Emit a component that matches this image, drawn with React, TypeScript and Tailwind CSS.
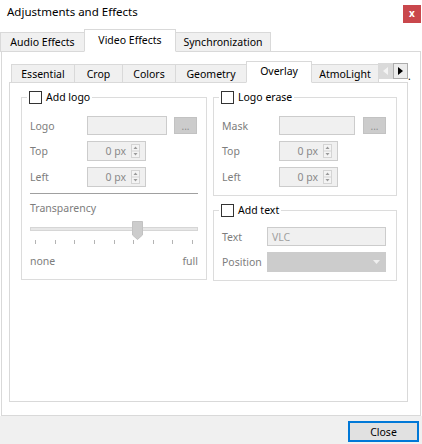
import React from 'react';

const Checkbox = () => <span className="block w-[13px] h-[13px] border border-[#333333] bg-white shrink-0" />;

const SpinArrows = () => (
  <svg width="9" height="14" viewBox="0 0 9 14" className="shrink-0">
    <rect x="0.5" y="0.5" width="8" height="13" fill="#f4f4f4" stroke="#d4d4d4" />
    <line x1="1" y1="7" x2="8" y2="7" stroke="#d4d4d4" />
    <polygon points="2.5,5 6.5,5 4.5,2.5" fill="#9a9a9a" />
    <polygon points="2.5,9 6.5,9 4.5,11.5" fill="#9a9a9a" />
  </svg>
);

const Spin = () => (
  <div className="flex items-center w-[59px] h-[20px] border border-[#cccccc] bg-[#f0f0f0] pr-[5px]">
    <span className="flex-1 text-right pr-[5px] text-[#8a8a8a]">0 px</span>
    <SpinArrows />
  </div>
);

const Browse = ({ w }: { w: string }) => (
  <div className={`${w} h-[17px] bg-[#cccccc] border border-[#c2c2c2] flex items-end justify-center pb-[2px] text-[#8c8c8c] text-[10px] leading-none`}>
    ...
  </div>
);

const Legend = ({ label }: { label: string }) => (
  <legend className="ml-[5px] px-[2px] h-[16px] flex items-center gap-[4px] text-black">
    <Checkbox />
    <span>{label}</span>
  </legend>
);

const Label = ({ children }: { children: React.ReactNode }) => (
  <span className="text-[#7d7d7d]">{children}</span>
);

const topTabs = [
  { name: 'Audio Effects', w: 'w-[85px]' },
  { name: 'Video Effects', w: 'w-[92px]', active: true },
  { name: 'Synchronization', w: 'w-[96px]' },
];

const innerTabs = [
  { name: 'Essential', w: 'w-[64px]' },
  { name: 'Crop', w: 'w-[49px]' },
  { name: 'Colors', w: 'w-[54px]' },
  { name: 'Geometry', w: 'w-[72px]' },
  { name: 'Overlay', w: 'w-[66px]', active: true },
  { name: 'AtmoLight', w: 'w-[68px]' },
];

export default function App() {
  return (
    <div className="w-[422px] h-[444px] bg-white flex flex-col font-['Noto_Sans',sans-serif] text-[10.5px] leading-[16px] text-black overflow-hidden">
      {/* title bar */}
      <div className="h-[29px] shrink-0 flex items-start justify-between">
        <span className="mt-[4px] ml-[7px] text-[11.5px]">Adjustments and Effects</span>
        <div className="mt-[5px] mr-[1px] w-[18px] h-[18px] bg-[#c9474c] flex items-center justify-center text-white text-[10px] font-bold leading-none pb-[2px]">
          x
        </div>
      </div>

      {/* top tabs */}
      <div className="flex items-end h-[23px] shrink-0 -mb-px relative z-10">
        {topTabs.map((t, i) => (
          <div
            key={t.name}
            className={`${t.w} ${i > 0 ? '-ml-px' : ''} flex items-center justify-center border border-[#d9d9d9] ${
              t.active ? 'h-[23px] bg-white border-b-white relative z-10 pb-[2px]' : 'h-[20px] bg-[#f0f0f0]'
            }`}
          >
            {t.name}
          </div>
        ))}
      </div>

      {/* outer pane */}
      <div className="ml-[1px] w-[420px] h-[365px] shrink-0 border border-[#d9d9d9] pt-[9px] pl-[7px]">
        <div className="flex items-end h-[22px] -mb-px relative z-10">
          {innerTabs.map((t, i) => (
            <div
              key={t.name}
              className={`${t.w} ${i > 0 ? '-ml-px' : 'ml-[2px]'} flex items-center justify-center border border-[#d9d9d9] ${
                t.active ? 'h-[22px] bg-white border-b-white relative z-10 pb-[2px]' : 'h-[19px] bg-[#f0f0f0]'
              }`}
            >
              {t.name}
            </div>
          ))}
          <div className="self-start mt-[2px] -ml-px flex relative z-20">
            <div className="w-[15px] h-[16px] bg-[#dadada] flex items-center justify-center">
              <svg width="5" height="8" viewBox="0 0 5 8">
                <polygon points="5,0 5,8 0,4" fill="#f4f4f4" />
              </svg>
            </div>
            <div className="w-[15px] h-[16px] bg-[#ececec] border border-[#adadad] flex items-center justify-center">
              <svg width="5" height="8" viewBox="0 0 5 8">
                <polygon points="0,0 0,8 5,4" fill="#000000" />
              </svg>
            </div>
            <span className="text-[10px] leading-none self-end -mb-[2px]">.</span>
          </div>
        </div>

        {/* inner pane */}
        <div className="w-[399px] h-[320px] border border-[#d9d9d9] bg-white pt-[6px] pl-[11px] flex gap-[6px] items-start">
          {/* left column */}
          <fieldset className="w-[186px] border border-[#dcdcdc] p-0 m-0 min-w-0">
            <Legend label="Add logo" />
            <div className="pl-[8px] pr-[8px] pt-[11px] pb-[10px] flex flex-col">
              <div className="grid grid-cols-[57px_1fr] gap-y-[6px] items-center">
                <Label>Logo</Label>
                <div className="flex items-center gap-[7px] h-[19px]">
                  <div className="w-[80px] h-[19px] border border-[#cccccc] bg-[#f0f0f0]" />
                  <Browse w="w-[23px]" />
                </div>
                <Label>Top</Label>
                <Spin />
                <Label>Left</Label>
                <Spin />
              </div>
              <div className="mt-[6px] h-px bg-[#a0a0a0]" />
              <div className="mt-[6px] h-[16px]">
                <Label>Transparency</Label>
              </div>
              <div className="mt-[5px] h-[25px] relative flex flex-col">
                <div className="mt-[6px] h-[4px] border border-[#d6d6d6] bg-[#e7e7e7]" />
                <div className="mt-[9px] h-[5px] flex justify-between px-[5px]">
                  {Array.from({ length: 9 }).map((_, i) => (
                    <span key={i} className="w-px h-[4px] bg-[#b4b4b4]" />
                  ))}
                </div>
                <svg width="11" height="19" viewBox="0 0 11 19" className="absolute left-[102px] top-0">
                  <polygon points="0.5,0.5 10.5,0.5 10.5,14 5.5,18.5 0.5,14" fill="#cccccc" stroke="#c2c2c2" />
                </svg>
              </div>
              <div className="mt-[7px] flex justify-between">
                <Label>none</Label>
                <Label>full</Label>
              </div>
            </div>
          </fieldset>

          {/* right column */}
          <div className="w-[184px] flex flex-col gap-[6px]">
            <fieldset className="border border-[#dcdcdc] p-0 m-0 min-w-0">
              <Legend label="Logo erase" />
              <div className="pl-[8px] pr-[10px] pt-[11px] pb-[8px]">
                <div className="grid grid-cols-[57px_1fr] gap-y-[6px] items-center">
                  <Label>Mask</Label>
                  <div className="flex items-center gap-[8px] h-[19px]">
                    <div className="w-[76px] h-[19px] border border-[#cccccc] bg-[#f0f0f0]" />
                    <Browse w="w-[23px]" />
                  </div>
                  <Label>Top</Label>
                  <Spin />
                  <Label>Left</Label>
                  <Spin />
                </div>
              </div>
            </fieldset>
            <fieldset className="border border-[#dcdcdc] p-0 m-0 min-w-0">
              <Legend label="Add text" />
              <div className="pl-[8px] pr-[10px] pt-[9px] pb-[8px]">
                <div className="grid grid-cols-[45px_1fr] gap-y-[6px] items-center">
                  <Label>Text</Label>
                  <div className="h-[19px] border border-[#cccccc] bg-[#f0f0f0] flex items-center pl-[4px] text-[#a0a0a0]">
                    VLC
                  </div>
                  <Label>Position</Label>
                  <div className="h-[20px] bg-[#cccccc] flex items-center justify-end pr-[6px]">
                    <svg width="7" height="5" viewBox="0 0 7 5">
                      <polygon points="0,0 7,0 3.5,4" fill="#efefef" />
                    </svg>
                  </div>
                </div>
              </div>
            </fieldset>
          </div>
        </div>
      </div>

      {/* bottom bar */}
      <div className="flex-1 bg-[#f0f0f0] flex justify-end items-start pt-[5px] pr-[3px]">
        <div className="w-[71px] h-[21px] border-2 border-[#0078d7] bg-[#e1e1e1] flex items-center justify-center">
          Close
        </div>
      </div>
    </div>
  );
}
